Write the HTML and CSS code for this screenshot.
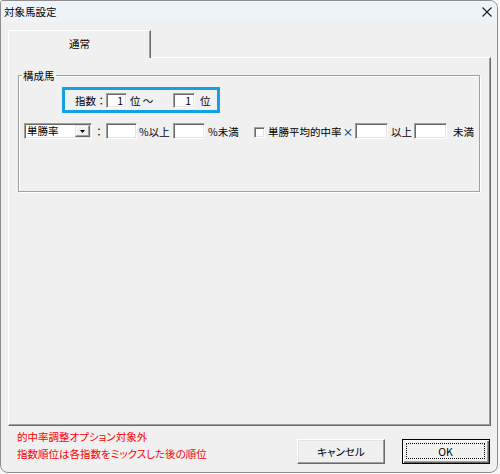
FILE: index.html
```html
<!DOCTYPE html>
<html lang="ja">
<head>
<meta charset="utf-8">
<title>対象馬設定</title>
<link rel="stylesheet" href="styles.css">
</head>
<body>
<div class="window">
  <div class="titlebar">
    <span class="title">対象馬設定</span>
    <svg class="close" width="10" height="10" viewBox="0 0 10 10"><path d="M0.5 0.5L9.5 9.5M9.5 0.5L0.5 9.5" stroke="#1a1a1a" stroke-width="1.1" fill="none"/></svg>
  </div>
  <div class="client">
    <div class="tabs"><div class="tab">通常</div></div>
    <div class="panel">
      <div class="group">
        <span class="legend">構成馬</span>
        <div class="rank">
          <span class="lbl-idx">指数：</span>
          <span class="field num w21">1</span>
          <span class="lbl-pos">位 ～</span>
          <span class="field num w22">1</span>
          <span class="lbl-end">位</span>
        </div>
        <div class="row">
          <div class="combo">
            <span class="combo-text">単勝率</span>
            <span class="combo-btn"><svg width="5" height="3" viewBox="0 0 5 3"><path d="M0 0H5L2.5 3Z" fill="#000"/></svg></span>
          </div>
          <span class="lbl-colon">：</span>
          <span class="field w31"></span>
          <span class="lbl-a">%以上</span>
          <span class="field w32"></span>
          <span class="lbl-b">%未満</span>
          <span class="check"></span>
          <span class="lbl-c">単勝平均的中率</span>
          <span class="lbl-x">×</span>
          <span class="field w33"></span>
          <span class="lbl-d">以上</span>
          <span class="field w33"></span>
          <span class="lbl-e">未満</span>
        </div>
      </div>
    </div>
    <div class="footer">
      <div class="notes">
        <div>的中率調整オプション対象外</div>
        <div>指数順位は各指数をミックスした後の順位</div>
      </div>
      <div class="buttons">
        <button class="btn" type="button">キャンセル</button>
        <button class="btn default" type="button"><span class="focus">OK</span></button>
      </div>
    </div>
  </div>
</div>
</body>
</html>
```
FILE: styles.css
```css
* { box-sizing: border-box; }
html, body { margin: 0; padding: 0; }
body {
  width: 500px;
  height: 474px;
  overflow: hidden;
  background: #f7f7f7;
  font-family: "Noto Sans CJK JP", "Noto Sans", sans-serif;
  font-size: 10.5px;
  color: #000;
  white-space: nowrap;
}
.window {
  width: 498px;
  height: 473px;
  border: 1px solid #8e8e8e;
  border-radius: 3px 8px 8px 8px;
  background: #f0f0f0;
  overflow: hidden;
  display: flex;
  flex-direction: column;
}
.titlebar {
  height: 21px;
  flex: none;
  background: #eef3fa;
  display: flex;
  align-items: center;
  justify-content: space-between;
  padding: 0 5px 0 3px;
}
.title { line-height: 12px; }
.close { display: block; width: 10px; height: 10px; }
.client {
  flex: 1;
  display: flex;
  flex-direction: column;
  padding: 8px 6px 0 7px;
}
.tabs { height: 27px; flex: none; display: flex; }
.tab {
  position: relative;
  z-index: 1;
  width: 143px;
  height: 28px;
  background: #f0f0f0;
  border-left: 1px solid #fff;
  border-top: 1px solid #fff;
  border-right: 1px solid #696969;
  box-shadow: inset -1px 0 #a0a0a0;
  display: flex;
  align-items: center;
  justify-content: center;
  padding-bottom: 2px;
}
.panel {
  height: 369px;
  flex: none;
  border-left: 1px solid #fff;
  border-top: 1px solid #fff;
  border-right: 1px solid #696969;
  border-bottom: 1px solid #696969;
  box-shadow: inset -1px -1px #a0a0a0;
  padding: 17px 0 0 9px;
}
.group {
  position: relative;
  width: 462px;
  height: 117px;
  border: 1px solid #a0a0a0;
  box-shadow: inset 1px 1px #fff, 1px 1px #fff;
  padding-top: 11px;
}
.legend {
  position: absolute;
  left: 3px;
  top: -7px;
  padding: 0 1px;
  background: #f0f0f0;
  line-height: 13px;
}
.rank {
  width: 158px;
  height: 26px;
  margin-left: 43px;
  border: 3px solid #14a0e4;
  display: flex;
  align-items: center;
}
.field {
  height: 16px;
  flex: none;
  background: #fff;
  border: 1px solid;
  border-color: #a0a0a0 #fff #fff #a0a0a0;
  box-shadow: inset 1px 1px #696969, inset -1px -1px #e3e3e3;
  line-height: 14px;
}
.rank .field { height: 15px; line-height: 13px; }
.num { text-align: right; padding-right: 3px; }
.w21 { width: 21px; }
.w22 { width: 22px; }
.w31 { width: 31px; }
.w32 { width: 32px; }
.w33 { width: 33px; }
.lbl-idx { width: 41px; padding-left: 10px; flex: none; overflow: visible; }
.lbl-pos { width: 46px; padding-left: 3px; flex: none; }
.lbl-end { padding-left: 5px; }
.row {
  display: flex;
  align-items: center;
  height: 16px;
  margin: 10px 0 0 5px;
}
.combo {
  width: 68px;
  height: 16px;
  flex: none;
  display: flex;
  align-items: center;
  background: #fff;
  border: 1px solid;
  border-color: #a0a0a0 #fff #fff #a0a0a0;
  box-shadow: inset 1px 1px #696969, inset -1px -1px #e3e3e3;
  padding: 1px 1px 1px 2px;
}
.combo-text { flex: 1; line-height: 12px; }
.combo-btn {
  width: 15px;
  height: 12px;
  flex: none;
  display: flex;
  align-items: center;
  justify-content: center;
  background: #f0f0f0;
  border: 1px solid;
  border-color: #e3e3e3 #696969 #696969 #e3e3e3;
  box-shadow: inset -1px -1px #a0a0a0, inset 1px 1px #fff;
}
.combo-btn svg { display: block; }
.lbl-colon { width: 14px; flex: none; text-align: center; }
.lbl-a { width: 36px; flex: none; padding-left: 2px; }
.lbl-b { width: 49px; flex: none; padding-left: 3px; }
.check {
  width: 11px;
  height: 11px;
  flex: none;
  background: #fff;
  border: 1px solid;
  border-color: #a0a0a0 #fff #fff #a0a0a0;
  box-shadow: inset 1px 1px #696969, inset -1px -1px #e3e3e3;
  margin-top: 2px;
}
.lbl-c { width: 76px; flex: none; padding-left: 3px; }
.lbl-x { width: 14px; flex: none; text-align: center; }
.lbl-d { width: 26px; flex: none; padding-left: 3px; }
.lbl-e { padding-left: 6px; }
.footer {
  flex: 1;
  display: flex;
  justify-content: space-between;
  padding: 2px 1px 0 9px;
}
.notes {
  color: #ff0000;
  line-height: 17px;
  font-feature-settings: "palt";
}
.buttons {
  display: flex;
  gap: 17px;
  margin-top: 11px;
}
.btn {
  width: 88px;
  height: 25px;
  padding: 0;
  font: inherit;
  color: #000;
  background: #f0f0f0;
  border: 1px solid;
  border-color: #fff #696969 #696969 #fff;
  box-shadow: inset -1px -1px #a0a0a0, inset 1px 1px #e3e3e3;
  display: flex;
  align-items: center;
  justify-content: center;
  font-feature-settings: "palt";
}
.btn.default {
  border: 1px solid #000;
  box-shadow: inset 1px 1px #fff, inset -1px -1px #696969, inset -2px -2px #a0a0a0;
  padding: 3px 4px 4px 3px;
}
.focus {
  width: 100%;
  height: 100%;
  border: 1px dotted #000;
  display: flex;
  align-items: center;
  justify-content: center;
}
```
